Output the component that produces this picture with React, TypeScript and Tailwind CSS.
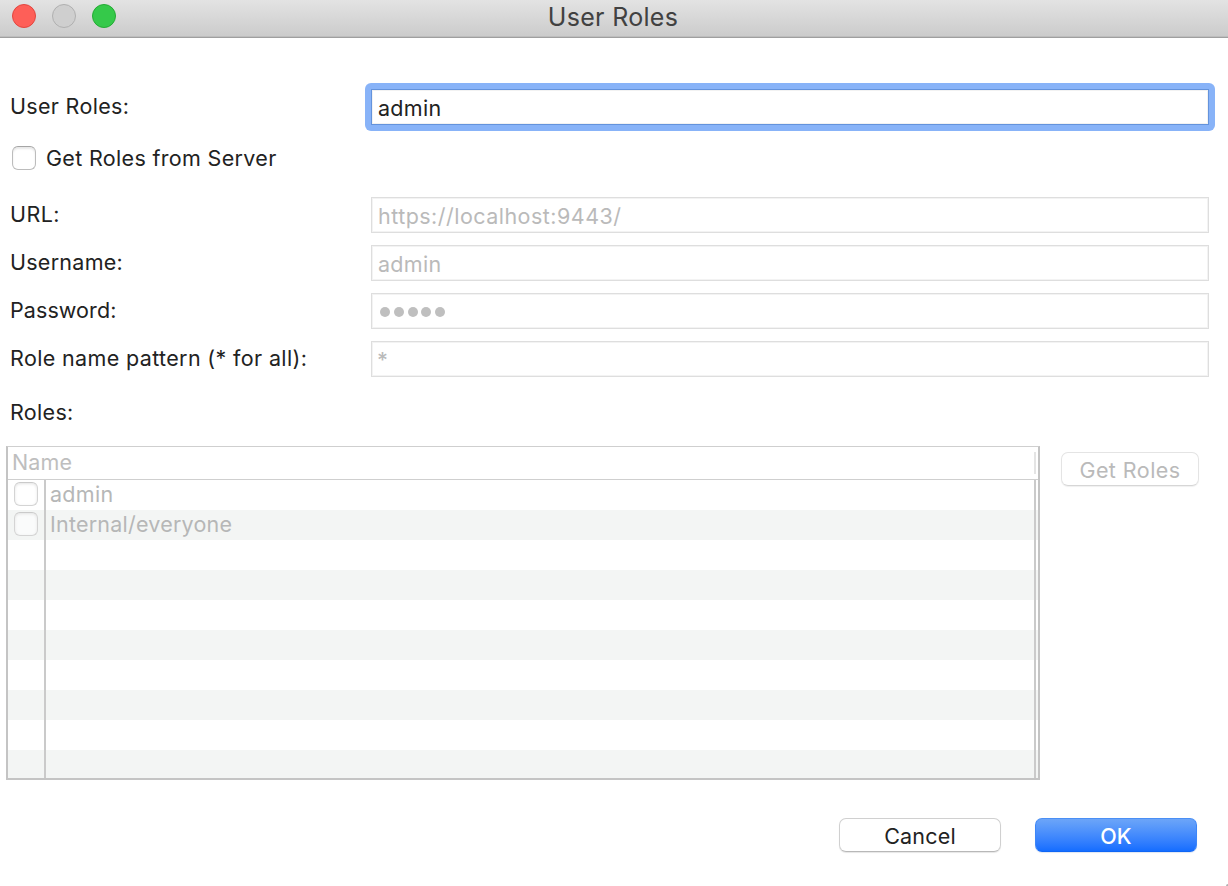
import type { ReactNode } from "react";

type FieldProps = {
  label: string;
  labelTracking: string;
  children: ReactNode;
  focused?: boolean;
};

function Field({ label, labelTracking, children, focused }: FieldProps) {
  return (
    <div className="flex h-9">
      <label className={`w-[361px] shrink-0 pt-1 ${labelTracking}`}>{label}</label>
      {focused ? (
        <div className="-m-1.5 h-12 w-[850px] shrink-0 rounded-[6px] bg-[#88b3f8] p-1.5">
          <div className="h-9 border border-[#6493dc] bg-white px-1.5 pt-[5px] shadow-[inset_0_0_0_1px_#f2f2f2]">
            {children}
          </div>
        </div>
      ) : (
        <div className="h-9 w-[838px] border border-[#dedede] px-1.5 pt-[5px] text-[#bababa] shadow-[inset_0_0_0_1px_#f3f3f3]">
          {children}
        </div>
      )}
    </div>
  );
}

const rows = [
  { name: "admin", tracking: "tracking-[0.3px]" },
  { name: "Internal/everyone", tracking: "tracking-[0.22px]" },
  null,
  null,
  null,
  null,
  null,
  null,
  null,
  null,
];

export default function App() {
  return (
    <div className="relative flex h-[886px] w-[1228px] flex-col overflow-hidden bg-white font-['Inter',sans-serif] text-[21.5px] leading-[26px] whitespace-nowrap text-[#222222]">
      <header className="relative flex h-[38px] shrink-0 gap-4 border-b border-[#9f9f9f] bg-linear-to-b from-[#e3e3e3] to-[#cbcbcb] pt-1 pl-3 shadow-[inset_0_-1px_0_#bdbdbd]">
        <span className="size-6 rounded-full border border-[#e2463f] bg-[#fe5f58]" />
        <span className="size-6 rounded-full border border-[#b0b0b0] bg-[#cfcfcf]" />
        <span className="size-6 rounded-full border border-[#24ab34] bg-[#35c94a]" />
        <h1 className="absolute inset-x-0 top-[2px] pr-[2px] text-center text-[25px] leading-[30px] tracking-[0.3px] text-[#414141]">
          User Roles
        </h1>
      </header>

      <main className="flex flex-col pl-2.5">
        <div className="mt-[51px]">
          <Field label="User Roles:" labelTracking="tracking-[0.32px]" focused>
            <span className="tracking-[0.3px]">admin</span>
          </Field>
        </div>

        <label className="mt-5 flex h-[26px] gap-2.5 pl-0.5 tracking-[0.33px]">
          <span className="mt-px size-6 rounded-[6px] border border-[#bcbcbc] border-t-[#a5a5a5] bg-white shadow-[inset_0_2px_2px_#e8e8e8]" />
          Get Roles from Server
        </label>

        <div className="mt-[26px] flex flex-col gap-3">
          <Field label="URL:" labelTracking="tracking-[0.4px]">
            <span className="tracking-[0.47px]">https://localhost:9443/</span>
          </Field>
          <Field label="Username:" labelTracking="tracking-[0.26px]">
            <span className="tracking-[0.3px]">admin</span>
          </Field>
          <Field label="Password:" labelTracking="tracking-[0.08px]">
            <div className="flex gap-[3.8px] pt-2 pl-[2px]">
              {[0, 1, 2, 3, 4].map((n) => (
                <span key={n} className="size-2.5 rounded-full bg-[#bfbfbf]" />
              ))}
            </div>
          </Field>
          <Field label="Role name pattern (* for all):" labelTracking="tracking-[0.36px]">
            <span className="-ml-px text-[21px] leading-[25px] font-medium">*</span>
          </Field>
        </div>

        <div className="mt-[22px] tracking-[0.32px]">Roles:</div>
      </main>

      <section className="mt-[21px] flex pl-1.5">
        <div className="flex h-[334px] w-[1034px] flex-col border-2 border-t border-[#c4c4c4] border-t-[#cfcfcf]">
          <div className="flex h-[33px] shrink-0 items-start justify-between border-b border-[#cfcfcf] pr-0.5 pl-1 text-[#bebebe]">
            <span className="pt-[2px] tracking-[0.1px]">Name</span>
            <span className="mt-[5px] h-[22px] w-0.5 bg-[#e4e4e4]" />
          </div>
          <div className="flex min-h-0 flex-1 flex-col overflow-hidden">
            {rows.map((row, i) => (
              <div key={i} className="flex h-[30px] shrink-0 odd:bg-white even:bg-[#f3f5f4]">
                <div className="flex w-[38px] shrink-0 border-r-2 border-[#cacaca] pt-0.5 pl-1.5">
                  {row && (
                    <span className="size-6 rounded-[6px] border border-[#d4d4d4] border-t-[#cacaca] bg-white/60 shadow-[inset_0_1px_3px_#e4e4e4]" />
                  )}
                </div>
                <div className="flex-1 border-r-2 border-[#cacaca] pt-px pl-1 text-[#b6b7b7]">
                  {row && <span className={row.tracking}>{row.name}</span>}
                </div>
                <div className="w-0.5" />
              </div>
            ))}
          </div>
        </div>
        <button className="mt-1.5 ml-[21px] flex h-[34px] w-[138px] justify-center rounded-[7px] border border-[#e4e4e4] border-b-[#d6d6d6] pt-1 tracking-[0.45px] text-[#bababa] shadow-[0_1px_1px_#f0f0f0]">
          Get Roles
        </button>
      </section>

      <footer className="mt-[38px] flex gap-[34px] pl-[839px]">
        <button className="flex h-[34px] w-[162px] justify-center rounded-[7px] border border-[#d0d0d0] border-b-[#b8b8b8] pt-1 tracking-[0.2px] shadow-[0_1px_1px_#e6e6e6]">
          Cancel
        </button>
        <button className="flex h-[34px] w-[162px] justify-center rounded-[7px] border border-[#4a8ff5] border-x-[#3d86f8] border-b-[#0f66f5] bg-linear-to-b from-[#6ca5f8] to-[#146dff] pt-1 font-medium text-white shadow-[0_1px_1px_#dfe6f2]">
          OK
        </button>
      </footer>

      <span className="absolute right-0 bottom-0 size-0.5 rounded-tl-[2px] bg-[#b0b0b0]" />
    </div>
  );
}
